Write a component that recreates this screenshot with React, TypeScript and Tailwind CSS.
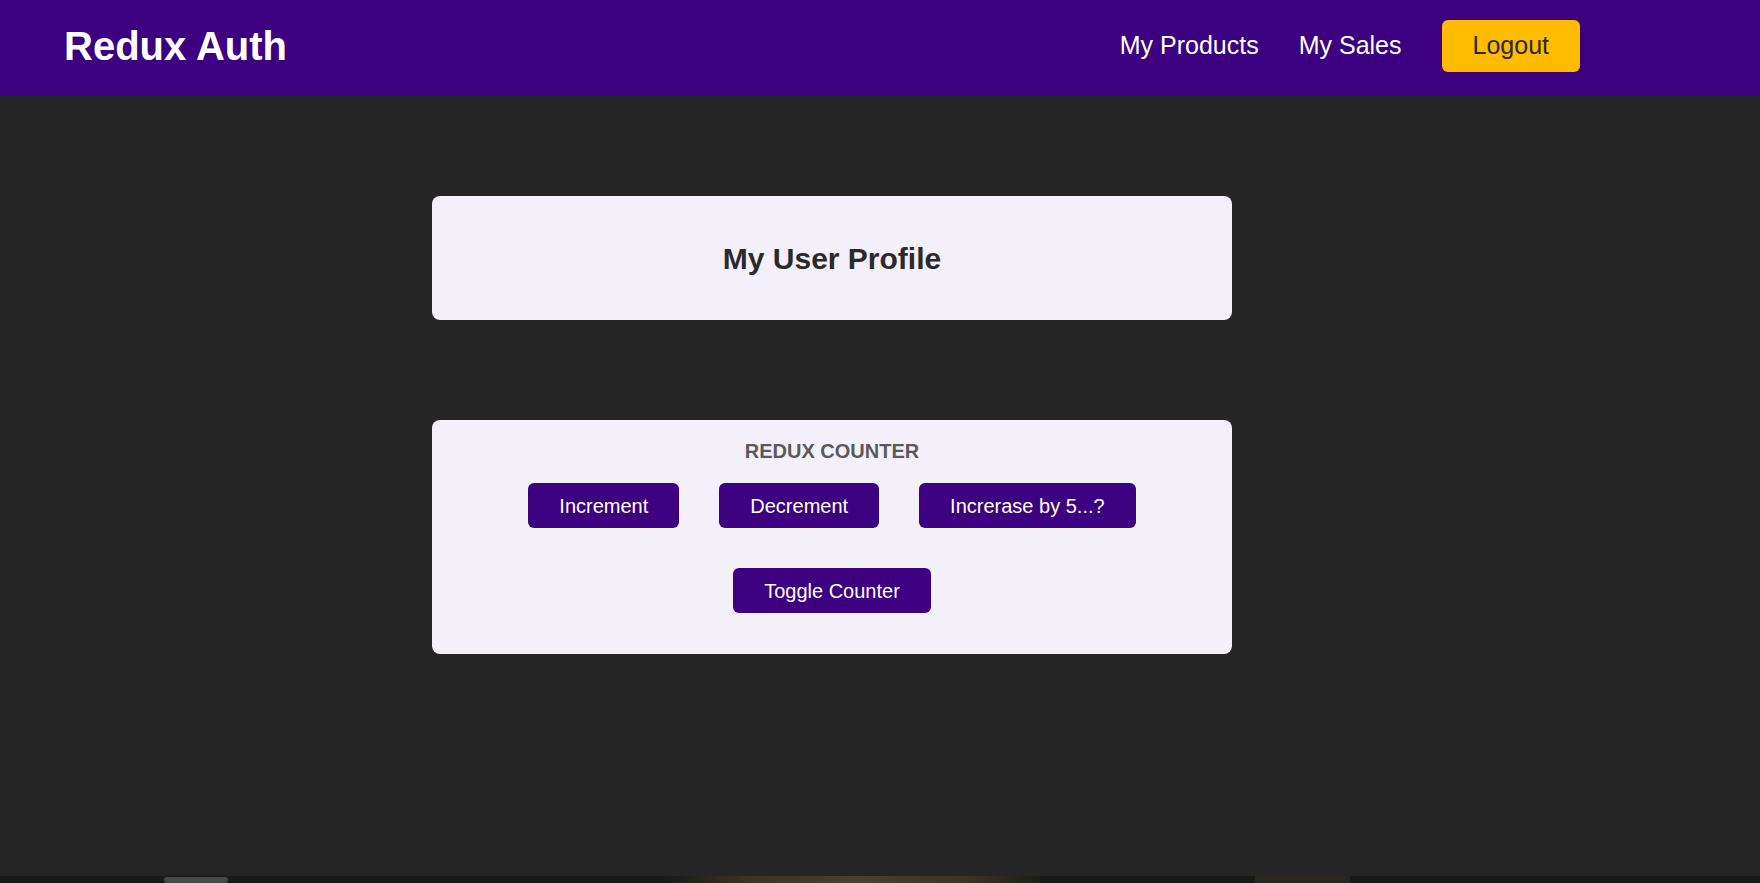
import React from "react";

export default function App() {
  return (
    <div className="relative min-h-[883px] h-[883px] w-full overflow-hidden bg-[#252525] font-['Liberation_Sans',Arial,sans-serif]">
      <header className="flex h-[96px] items-center justify-between bg-[#3c0080] pb-[4px] pl-[64px] pr-[180px]">
        <h1 className="text-[40px] font-bold leading-none text-white">Redux Auth</h1>
        <nav className="flex items-center gap-[40px]">
          <a className="text-[25px] text-white">My Products</a>
          <a className="text-[25px] text-white">My Sales</a>
          <button className="h-[52px] rounded-[6px] bg-[#ffbb00] px-[31px] text-[25px] text-[#2c292b]">
            Logout
          </button>
        </nav>
      </header>

      <main className="flex flex-col pt-[100px]">
        <section className="ml-[432px] flex h-[124px] w-[800px] items-center justify-center rounded-[8px] bg-[#f3f0fa]">
          <h2 className="text-[30px] font-bold text-[#2c292b]">My User Profile</h2>
        </section>

        <section className="ml-[432px] mt-[100px] flex w-[800px] flex-col items-center rounded-[8px] bg-[#f3f0fa] pb-[41px] pt-[20px]">
          <h3 className="text-[20px] font-bold leading-[23px] text-[#5a5a5a]">REDUX COUNTER</h3>
          <div className="mt-[20px] flex gap-[40px]">
            <button className="h-[45px] rounded-[6px] bg-[#3c0080] px-[31px] text-[20px] text-white">Increment</button>
            <button className="h-[45px] rounded-[6px] bg-[#3c0080] px-[31px] text-[20px] text-white">Decrement</button>
            <button className="h-[45px] rounded-[6px] bg-[#3c0080] px-[31px] text-[20px] text-white">Increrase by 5...?</button>
          </div>
          <button className="mt-[40px] h-[45px] rounded-[6px] bg-[#3c0080] px-[31px] text-[20px] text-white">Toggle Counter</button>
        </section>
      </main>

      <div className="absolute bottom-0 left-0 h-[7px] w-full">
        <svg width="1760" height="7" viewBox="0 0 1760 7" className="block">
          <defs>
            <linearGradient id="g1" x1="0" x2="1">
              <stop offset="0" stopColor="#1b1b1b" />
              <stop offset="0.2" stopColor="#3a3222" />
              <stop offset="0.5" stopColor="#4a4030" />
              <stop offset="0.8" stopColor="#3b3424" />
              <stop offset="1" stopColor="#1e1d1b" />
            </linearGradient>
          </defs>
          <rect x="0" y="0" width="1760" height="7" fill="#1a1a1a" />
          <rect x="164" y="1" width="64" height="6" rx="3" fill="#4a4a4a" />
          <rect x="670" y="0" width="370" height="7" fill="url(#g1)" />
          <rect x="1255" y="0" width="95" height="7" fill="#2a2720" />
        </svg>
      </div>
    </div>
  );
}
